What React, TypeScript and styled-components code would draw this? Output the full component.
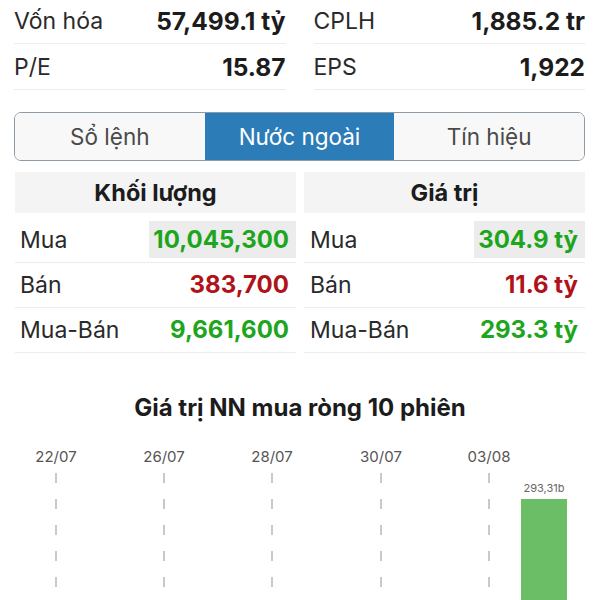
import React from "react";
import styled, { createGlobalStyle } from "styled-components";

const GlobalStyle = createGlobalStyle`
    html, body {
        margin: 0;
        padding: 0;
        background: #ffffff;
    }
    body {
        font-family: Inter, "Liberation Sans", sans-serif;
        color: #1f1f1f;
        width: 600px;
        overflow: hidden;
    }
`;

const Page = styled.div`
    width: 600px;
    height: 600px;
    overflow: hidden;
`;

const InfoGrid = styled.div`
    display: grid;
    grid-template-columns: 1fr 1fr;
    column-gap: 28px;
    padding: 0 15px 0 14px;
    margin-top: -2px;
`;

const InfoRow = styled.div`
    display: flex;
    align-items: center;
    justify-content: space-between;
    height: 45px;
    border-bottom: 1px solid #ededed;
`;

const InfoLabel = styled.span`
    font-size: 23px;
    color: #2a2a2a;
`;

const InfoValue = styled.span`
    font-size: 24.5px;
    font-weight: 700;
    color: #1c1c1c;
`;

const Tabs = styled.div`
    display: grid;
    grid-template-columns: 1fr 1fr 1fr;
    margin: 22px 15px 0 14px;
    height: 49px;
    border: 1.5px solid #8d9ba6;
    border-radius: 7px;
    overflow: hidden;
    box-sizing: border-box;
`;

const Tab = styled.div<{ $active?: boolean }>`
    display: flex;
    align-items: center;
    justify-content: center;
    font-size: 22.5px;
    color: ${(p) => (p.$active ? "#ffffff" : "#4a4a4a")};
    background: ${(p) => (p.$active ? "#2c7cb8" : "#f8f8f8")};
`;

const Panels = styled.div`
    display: grid;
    grid-template-columns: 281px 281px;
    column-gap: 8px;
    margin: 11px 0 0 15px;
`;

const Panel = styled.div``;

const PanelHeader = styled.div`
    height: 41px;
    background: #f4f4f4;
    display: flex;
    align-items: center;
    justify-content: center;
    font-size: 23.5px;
    font-weight: 700;
    color: #1c1c1c;
    margin-bottom: 5px;
`;

const DataRow = styled.div`
    display: flex;
    align-items: stretch;
    justify-content: space-between;
    height: 45px;
    box-sizing: border-box;
    border-bottom: 1px solid #ececec;
    padding: 3px 0 4px;
`;

const DataLabel = styled.span<{ $inset: number }>`
    display: flex;
    align-items: center;
    padding-left: ${(p) => p.$inset}px;
    font-size: 23px;
    color: #2a2a2a;
`;

const DataValue = styled.span<{ $tone: "up" | "down"; $marked?: boolean }>`
    display: flex;
    align-items: center;
    justify-content: flex-end;
    padding: 0 7px 0 4px;
    font-size: 24px;
    font-weight: 700;
    color: ${(p) => (p.$tone === "up" ? "#1ea51e" : "#b0121a")};
    background: ${(p) => (p.$marked ? "#ececec" : "transparent")};
`;

const ChartTitle = styled.div`
    margin-top: 40px;
    text-align: center;
    font-size: 24px;
    font-weight: 700;
    color: #1c1c1c;
`;

const ChartBox = styled.div`
    margin-top: 8px;
    width: 600px;
    height: 180px;
`;

type Cell = { label: string; value: string; tone: "up" | "down"; marked?: boolean };

const volume: Cell[] = [
    { label: "Mua", value: "10,045,300", tone: "up", marked: true },
    { label: "Bán", value: "383,700", tone: "down" },
    { label: "Mua-Bán", value: "9,661,600", tone: "up" },
];

const worth: Cell[] = [
    { label: "Mua", value: "304.9 tỷ", tone: "up", marked: true },
    { label: "Bán", value: "11.6 tỷ", tone: "down" },
    { label: "Mua-Bán", value: "293.3 tỷ", tone: "up" },
];

const dates = [
    { x: 56, t: "22/07" },
    { x: 164, t: "26/07" },
    { x: 272, t: "28/07" },
    { x: 381, t: "30/07" },
    { x: 489, t: "03/08" },
];

const Chart = () => (
    <svg width="600" height="180" viewBox="0 0 600 180">
        {dates.map((d) => (
            <g key={d.t}>
                <text x={d.x} y={32} textAnchor="middle" fontSize="15" fill="#555" fontFamily="Inter, sans-serif">
                    {d.t}
                </text>
                <line x1={d.x} y1={43} x2={d.x} y2={180} stroke="#c9c9c9" strokeWidth="2" strokeDasharray="10 16" />
            </g>
        ))}
        <text x={544} y={62} textAnchor="middle" fontSize="11" fill="#666" fontFamily="Inter, sans-serif">
            293,31b
        </text>
        <rect x={521} y={69} width={46} height={120} fill="#6bbd66" />
    </svg>
);

const DataPanel = ({ title, rows, inset }: { title: string; rows: Cell[]; inset: number }) => (
    <Panel>
        <PanelHeader>{title}</PanelHeader>
        {rows.map((r) => (
            <DataRow key={r.label}>
                <DataLabel $inset={inset}>{r.label}</DataLabel>
                <DataValue $tone={r.tone} $marked={r.marked}>
                    {r.value}
                </DataValue>
            </DataRow>
        ))}
    </Panel>
);

export default function App() {
    return (
        <Page>
            <GlobalStyle />
            <InfoGrid>
                <InfoRow>
                    <InfoLabel>Vốn hóa</InfoLabel>
                    <InfoValue>57,499.1 tỷ</InfoValue>
                </InfoRow>
                <InfoRow>
                    <InfoLabel>CPLH</InfoLabel>
                    <InfoValue>1,885.2 tr</InfoValue>
                </InfoRow>
                <InfoRow>
                    <InfoLabel>P/E</InfoLabel>
                    <InfoValue>15.87</InfoValue>
                </InfoRow>
                <InfoRow>
                    <InfoLabel>EPS</InfoLabel>
                    <InfoValue>1,922</InfoValue>
                </InfoRow>
            </InfoGrid>

            <Tabs>
                <Tab>Sổ lệnh</Tab>
                <Tab $active>Nước ngoài</Tab>
                <Tab>Tín hiệu</Tab>
            </Tabs>

            <Panels>
                <DataPanel title="Khối lượng" rows={volume} inset={5} />
                <DataPanel title="Giá trị" rows={worth} inset={6} />
            </Panels>

            <ChartTitle>Giá trị NN mua ròng 10 phiên</ChartTitle>
            <ChartBox>
                <Chart />
            </ChartBox>
        </Page>
    );
}
